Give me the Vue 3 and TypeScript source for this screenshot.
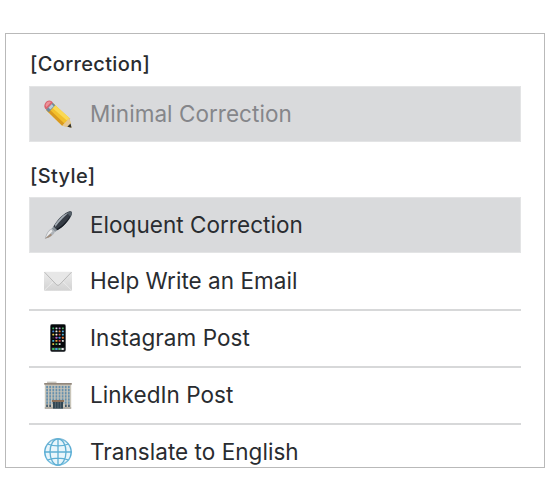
<script setup lang="ts">
interface Item {
  icon: 'pencil' | 'pen' | 'mail' | 'phone' | 'office' | 'globe'
  label: string
  state?: 'disabled' | 'selected'
}
interface Group {
  title: string
  items: Item[]
}

const groups: Group[] = [
  { title: '[Correction]', items: [{ icon: 'pencil', label: 'Minimal Correction', state: 'disabled' }] },
  {
    title: '[Style]',
    items: [
      { icon: 'pen', label: 'Eloquent Correction', state: 'selected' },
      { icon: 'mail', label: 'Help Write an Email' },
      { icon: 'phone', label: 'Instagram Post' },
      { icon: 'office', label: 'LinkedIn Post' },
      { icon: 'globe', label: 'Translate to English' },
    ],
  },
]

const appColors = [
  ['#35b66a', '#d9dce0', '#b57fc8', '#54b06a'],
  ['#3f86d8', '#e9e9e9', '#e58a3a', '#5fb4e6'],
  ['#e8c547', '#f1f1f1', '#d94f43', '#53b9dc'],
  ['#25272c', '#b557c4', '#3c92df', '#e8793a'],
  ['#4bb8de', '#e6a33c', '#d8454f', '#e9e9e9'],
  ['#e8c547', '#54c06a', '#dfe3e6', '#080c10'],
]
</script>

<template>
  <main class="page">
    <div class="panel">
      <section v-for="group in groups" :key="group.title" class="group">
        <h2 class="title">{{ group.title }}</h2>
        <ul class="list">
          <li v-for="item in group.items" :key="item.label" class="row" :class="item.state">
            <svg class="icon" viewBox="0 0 28 28" aria-hidden="true">
              <template v-if="item.icon === 'pencil'">
                <path d="M9.4 3.6 25.6 18.2 27.4 27.5 18.2 25.8 2.3 10.2Z" fill="#f3c02c" />
                <path d="M9.4 3.6 25.4 18 22.9 20.5 6.7 6.4Z" fill="#fad954" />
                <path d="M4.3 8.2 20.4 23.4 18.2 25.8 2.3 10.2Z" fill="#d9991f" />
                <path d="M25.4 18.1 27.4 27.6 18.1 25.7 20.4 23.2 22.9 20.8Z" fill="#e5c796" />
                <path d="m26.5 23.6 1.1 4.2-4.3-1Z" fill="#343330" />
                <path d="M8.6 2.5 11.3 5.3 4.7 12.3 1.9 9.4Z" fill="#71899c" />
                <path d="m7.6 4.1 2 2.1-3.2 3.4-2-2.1Z" fill="#b7cbd9" />
                <path d="M1 8.2C-.6 6 .8 2.8 2.8 1.2 4.9-.2 7.5.1 8.9 2.8L2.2 9.6Z" fill="#d9636d" />
                <path d="M1.5 5.4C2 2.5 4.9.6 7.1 2.1L2.6 6.9Z" fill="#ed929a" />
              </template>
              <template v-else-if="item.icon === 'pen'">
                <path d="M10.8 13.2C14.8 7.2 20.6 1.8 25.5.3 27.5-.3 28.5 1 27.8 3.3 26.3 8.2 20.6 14.7 14.5 18.6 12.7 19.7 10.1 20 9.4 18.4 8.7 16.8 9.4 15.3 10.8 13.2Z" fill="#363c45" />
                <path d="M11 13.6C15.4 7.2 20.6 2.6 25.2 1.2 21.5 4.6 15.7 9.8 11.3 16Z" fill="#a5adb5" />
                <path d="M24.4.9C26.9-.2 28.4.8 27.8 3.3L26.7 5.7 23.2 2.2Z" fill="#566069" />
                <path d="M12.5 18C17.4 15.6 23.9 9.3 26.8 3.7 24.9 10.3 18.4 16.6 13.2 19.2Z" fill="#171c24" />
                <path d="m9.6 15.6 3.6 3.7-2.2 1.7-3.5-3.3Z" fill="#89929a" />
                <path d="M7.7 17.4 11 20.8C9.6 24 6.6 26 2.8 27.3L.8 27.8 1.4 25.5C2.6 21.7 4.5 18.8 7.7 17.4Z" fill="#aeb3b9" />
                <path d="M7.2 18.4 8.5 20.2 1.7 26.9C3.1 22.8 4.6 19.9 7.2 18.4Z" fill="#ececed" />
                <path d="m.8 27.8 5.8-5 1.4 1.3C6.3 25.7 3.9 27.2.8 27.8Z" fill="#a08b79" />
              </template>
              <template v-else-if="item.icon === 'mail'">
                <defs>
                  <linearGradient id="paper" x1="0" y1="0" x2="0" y2="1">
                    <stop offset="0" stop-color="#ececec" />
                    <stop offset="1" stop-color="#d2d2d2" />
                  </linearGradient>
                </defs>
                <rect y="4.7" width="28" height="19" rx=".8" fill="url(#paper)" />
                <path d="M.4 23.3 10.4 13.4M27.6 23.3 17.6 13.4" fill="none" stroke="#f0f0f0" stroke-width=".8" />
                <path d="M.5 5H27.5L15.4 17.8Q14 19 12.6 17.8Z" fill="#e7e7e7" />
                <path d="M.5 5.2 12.6 17.8Q14 19 15.4 17.8L27.5 5.2" fill="none" stroke="#adadad" stroke-width=".8" />
              </template>
              <template v-else-if="item.icon === 'phone'">
                <rect x="6.1" y=".1" width="15.8" height="27.8" rx="1.8" fill="#62666a" />
                <rect x="6.8" y=".7" width="14.4" height="26.6" rx="1.2" fill="#06080b" />
                <g v-for="(line, y) in appColors" :key="y">
                  <rect v-for="(color, x) in line" :key="x" :x="8.3 + x * 3.2" :y="3.4 + y * 3.15" width="1.9" height="1.8" rx=".4" :fill="color" />
                </g>
                <rect x="7.5" y="23.5" width="13.2" height="3" fill="#30373b" />
                <rect x="8.2" y="24" width="2.2" height="2" fill="#40bd61" />
                <rect x="11.3" y="24" width="2.2" height="2" fill="#44a2d7" />
                <rect x="14.4" y="24" width="2.2" height="2" fill="#54bd77" />
                <rect x="17.5" y="24" width="2.2" height="2" fill="#e9e9e9" />
              </template>
              <template v-else-if="item.icon === 'office'">
                <path d="M3 .6H12.5V2.5H3Z" fill="#c9c6be" />
                <path d="M.8 3H27.2V27.7H.8Z" fill="#c9c5b9" />
                <path d="M.2 2H27.8V3.7H.2Z" fill="#92877c" />
                <g v-for="y in 6" :key="y">
                  <rect v-for="x in 8" :key="x" :x="x * 3.1 - .9" :y="y * 3.1 + 1.8" width="1.8" height="2.4" fill="#6690ad" />
                </g>
                <path d="M2.2 23.6H3.9V26H2.2ZM5.3 23.6H7V26H5.3ZM21 23.6H22.7V26H21ZM24.1 23.6H25.8V26H24.1Z" fill="#40576a" />
                <path d="M8 19H20V21H8Z" fill="#8c7059" />
                <path d="M9 21H19V27.7H9Z" fill="#304652" />
                <path d="M11.4 21V27.7M14 21V27.7M16.6 21V27.7" stroke="#768086" stroke-width=".6" />
                <path d="M.8 26.3H9V27.7H.8ZM19 26.3H27.2V27.7H19Z" fill="#aaa79f" />
              </template>
              <template v-else>
                <defs>
                  <linearGradient id="water" x1="0" y1="0" x2="0" y2="1">
                    <stop offset="0" stop-color="#87bed9" />
                    <stop offset=".5" stop-color="#48a4d0" />
                    <stop offset="1" stop-color="#84c6e3" />
                  </linearGradient>
                </defs>
                <circle cx="14" cy="14" r="13.2" fill="#e8f5fb" stroke="url(#water)" stroke-width="1.4" />
                <g fill="none" stroke="#5caed3" stroke-width="1.3">
                  <ellipse cx="14" cy="14" rx="8" ry="13.2" />
                  <path d="M14 .8V27.2M.8 14H27.2M3.4 6Q14 9.8 24.6 6M3.4 22Q14 18.2 24.6 22" />
                </g>
              </template>
            </svg>
            <span class="label">{{ item.label }}</span>
          </li>
        </ul>
      </section>
    </div>
  </main>
</template>

<style>
body {
  background: #fff;
}
</style>

<style scoped>
.page {
  box-sizing: border-box;
  height: 500px;
  padding: 33px 5px 32px;
  font-family: Inter, "Liberation Sans", sans-serif;
  color: #292c30;
}
.panel {
  box-sizing: border-box;
  height: 435px;
  padding: 7px 23px 0;
  overflow: hidden;
  border: 1px solid #b9b9b9;
}
.title {
  height: 45px;
  margin: 0;
  padding-left: 1px;
  font-size: 20px;
  font-weight: 500;
  line-height: 46px;
  letter-spacing: 0.35px;
}
.group + .group .title {
  height: 55px;
  line-height: 69px;
}
.list {
  margin: 0;
  padding: 0;
  list-style: none;
}
.row {
  box-sizing: border-box;
  display: flex;
  align-items: center;
  gap: 18px;
  width: 492px;
  height: 57px;
  padding: 0 0 1px 15px;
  border-bottom: 2px solid #d7d8d9;
}
.row.disabled,
.row.selected {
  height: 56px;
  border: 1px solid #e3e4e5;
  padding: 0 0 0 14px;
  background: #d9dadc;
}
.row.selected {
  margin-bottom: 1px;
}
.row.disabled {
  color: #85868a;
}
.icon {
  flex: none;
  width: 28px;
  height: 28px;
}
.label {
  font-size: 22.5px;
  line-height: 30px;
  letter-spacing: 0.04px;
  white-space: nowrap;
}
</style>
